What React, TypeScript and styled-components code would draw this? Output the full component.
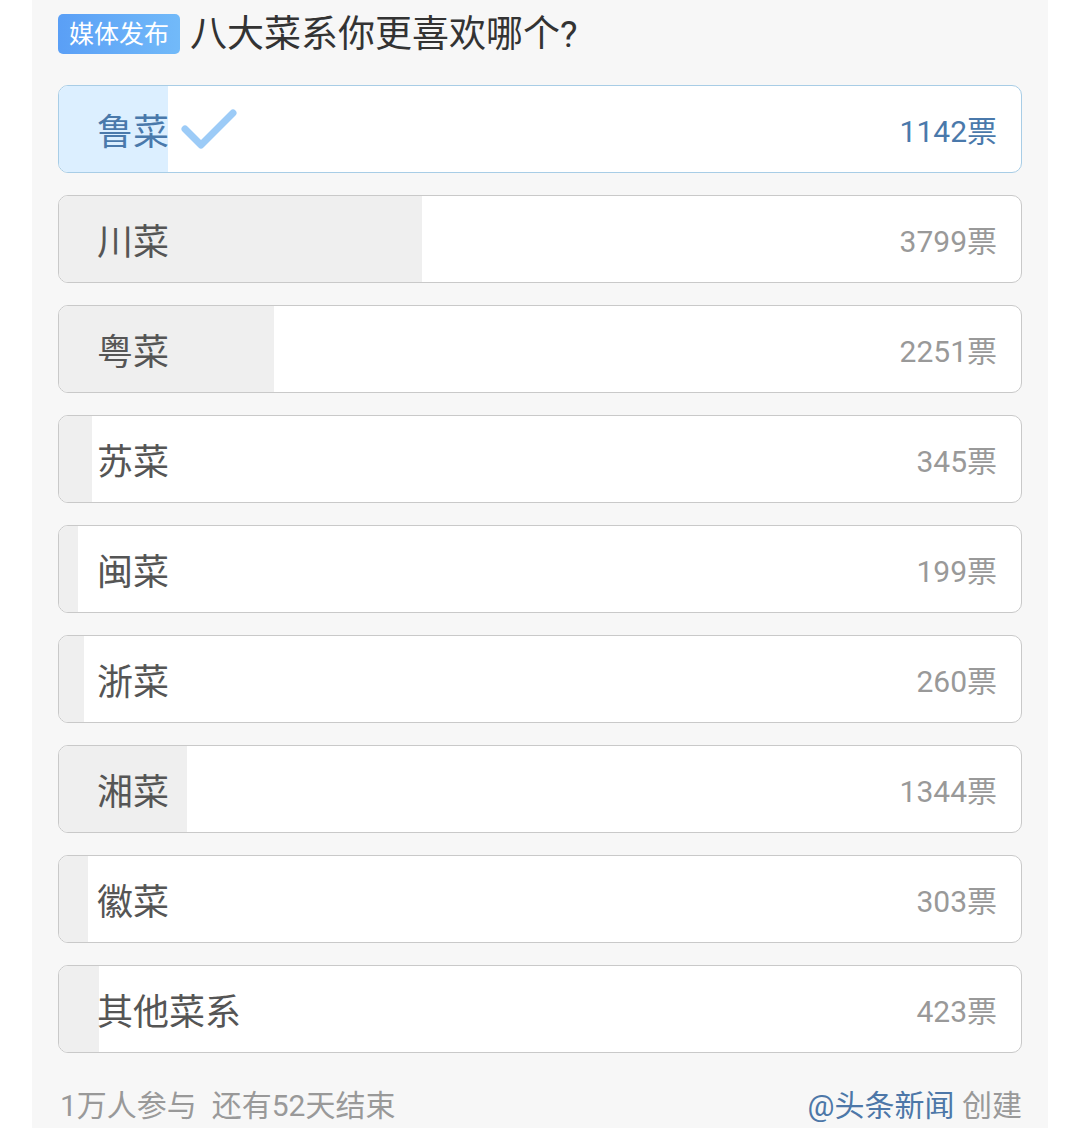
import { styled, createGlobalStyle } from 'styled-components'

const GlobalStyle = createGlobalStyle`
	html, body {
		margin: 0;
		padding: 0;
		background: #ffffff;
		font-family: Roboto, "Noto Sans CJK SC", sans-serif;
	}
`

const StyledPanel = styled.div`
	width: 964px;
	margin-left: 32px;
	padding: 10px 26px 0;
	background-color: #f7f7f7;
	height: 1118px;
	overflow: hidden;
`
const StyledTitleBar = styled.div`
	display: flex;
	align-items: center;
	gap: 10px;
	height: 48px;
`
const StyledBadge = styled.span`
	display: inline-flex;
	align-items: center;
	height: 40px;
	padding: 0 11px;
	border-radius: 5px;
	background: linear-gradient(90deg, #5a9ff6, #72baf9);
	color: #ffffff;
	font-size: 25px;
	line-height: 1;
`
const StyledTitle = styled.h1`
	margin: 0;
	font-size: 37px;
	font-weight: 400;
	color: #333333;
	line-height: 1;
`
const StyledOptions = styled.ul`
	list-style: none;
	margin: 27px 0 0;
	padding: 0;
	display: flex;
	flex-direction: column;
	gap: 22px;
`
const StyledOption = styled.li<{ $selected?: boolean }>`
	position: relative;
	height: 86px;
	border: 1px solid ${(p) => (p.$selected ? '#a8cde6' : '#c9c9c9')};
	border-radius: 10px;
	background-color: #ffffff;
	overflow: hidden;
	display: flex;
	align-items: center;
	justify-content: space-between;
	padding: 0 24px 0 38px;
`
const StyledFill = styled.div<{ $selected?: boolean }>`
	position: absolute;
	left: 0;
	top: 0;
	bottom: 0;
	background-color: ${(p) => (p.$selected ? '#dcefff' : '#efefef')};
`
const StyledLabel = styled.span<{ $selected?: boolean }>`
	position: relative;
	display: flex;
	align-items: center;
	gap: 12px;
	font-size: 36px;
	color: ${(p) => (p.$selected ? '#4a79ab' : '#555555')};
`
const StyledVotes = styled.span<{ $selected?: boolean }>`
	position: relative;
	font-size: 30px;
	color: ${(p) => (p.$selected ? '#4a79ab' : '#999999')};
`
const StyledFooter = styled.div`
	display: flex;
	justify-content: space-between;
	align-items: center;
	margin-top: 28px;
	font-size: 30px;
	color: #999999;
	padding-left: 2px;
`
const StyledAuthor = styled.span`
	color: #4d77a8;
`

const options = [
	{ name: '鲁菜', votes: 1142, selected: true },
	{ name: '川菜', votes: 3799 },
	{ name: '粤菜', votes: 2251 },
	{ name: '苏菜', votes: 345 },
	{ name: '闽菜', votes: 199 },
	{ name: '浙菜', votes: 260 },
	{ name: '湘菜', votes: 1344 },
	{ name: '徽菜', votes: 303 },
	{ name: '其他菜系', votes: 423 },
]

function CheckMark() {
	return (
		<svg width="56" height="44" viewBox="0 0 56 44">
			<path d="M4 22 L20 38 L52 6" fill="none" stroke="#9ccbf7" strokeWidth="7" strokeLinecap="round" strokeLinejoin="round" />
		</svg>
	)
}

export default function App() {
	const total = options.reduce((s, o) => s + o.votes, 0)

	return (
		<>
			<GlobalStyle />
			<StyledPanel>
				<StyledTitleBar>
					<StyledBadge>媒体发布</StyledBadge>
					<StyledTitle>八大菜系你更喜欢哪个?</StyledTitle>
				</StyledTitleBar>

				<StyledOptions>
					{options.map((o) => (
						<StyledOption key={o.name} $selected={o.selected}>
							<StyledFill $selected={o.selected} style={{ width: `${(o.votes / total) * 100}%` }} />
							<StyledLabel $selected={o.selected}>
								{o.name}
								{o.selected && <CheckMark />}
							</StyledLabel>
							<StyledVotes $selected={o.selected}>{o.votes}票</StyledVotes>
						</StyledOption>
					))}
				</StyledOptions>

				<StyledFooter>
					<span>1万人参与&nbsp;&nbsp;还有52天结束</span>
					<span>
						<StyledAuthor>@头条新闻</StyledAuthor> 创建
					</span>
				</StyledFooter>
			</StyledPanel>
		</>
	)
}
